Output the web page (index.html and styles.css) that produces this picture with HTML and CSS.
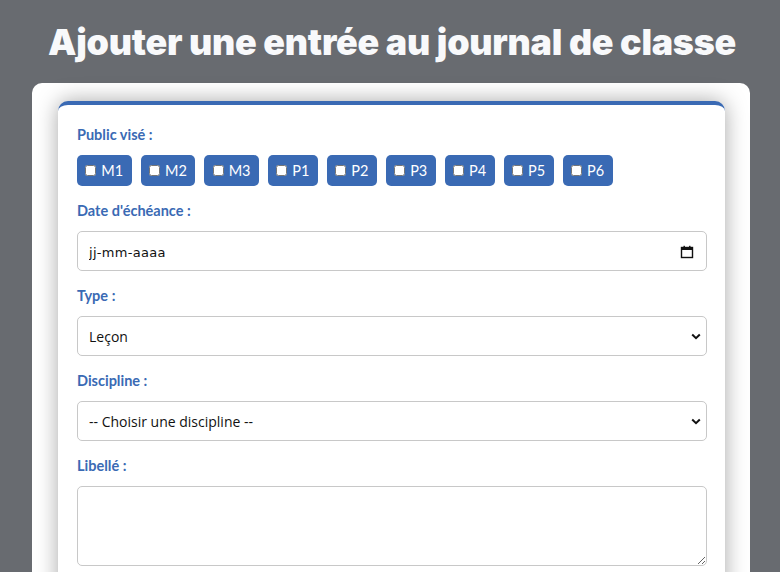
FILE: index.html
```html
<!DOCTYPE html>
<html lang="fr">
<head>
  <meta charset="UTF-8">
  <meta name="viewport" content="width=device-width, initial-scale=1">
  <title>Journal de classe</title>
  <link rel="stylesheet" href="styles.css">
</head>
<body>

  <h1 class="page-title">Ajouter une entrée au journal de classe</h1>

  <div class="outer-card">
    <form class="entry-form">

      <label class="field-label">Public visé :</label>
      <div class="chip-row">
        <label class="chip"><input type="checkbox"> M1</label>
        <label class="chip"><input type="checkbox"> M2</label>
        <label class="chip"><input type="checkbox"> M3</label>
        <label class="chip"><input type="checkbox"> P1</label>
        <label class="chip"><input type="checkbox"> P2</label>
        <label class="chip"><input type="checkbox"> P3</label>
        <label class="chip"><input type="checkbox"> P4</label>
        <label class="chip"><input type="checkbox"> P5</label>
        <label class="chip"><input type="checkbox"> P6</label>
      </div>

      <label class="field-label">Date d'échéance :</label>
      <div class="field-box date-box">
        <input class="date-text" type="text" placeholder="jj-mm-aaaa">
        <svg class="cal-icon" width="14" height="14" viewBox="0 0 14 14">
          <rect x="1.5" y="2.5" width="11" height="10" fill="none" stroke="#111" stroke-width="1.4"/>
          <rect x="1.5" y="2.5" width="11" height="2.5" fill="#111"/>
          <rect x="3.5" y="0.8" width="1.4" height="2.5" fill="#111"/>
          <rect x="9.1" y="0.8" width="1.4" height="2.5" fill="#111"/>
        </svg>
      </div>

      <label class="field-label">Type :</label>
      <div class="field-box select-box">
        <select class="plain-select">
          <option>Leçon</option>
          <option>Devoir</option>
          <option>Évaluation</option>
        </select>
        <svg class="chevron" width="10" height="7" viewBox="0 0 10 7">
          <path d="M1.2 1.5 L5 5.2 L8.8 1.5" fill="none" stroke="#111" stroke-width="2"/>
        </svg>
      </div>

      <label class="field-label">Discipline :</label>
      <div class="field-box select-box">
        <select class="plain-select">
          <option>-- Choisir une discipline --</option>
          <option>Français</option>
          <option>Mathématiques</option>
        </select>
        <svg class="chevron" width="10" height="7" viewBox="0 0 10 7">
          <path d="M1.2 1.5 L5 5.2 L8.8 1.5" fill="none" stroke="#111" stroke-width="2"/>
        </svg>
      </div>

      <label class="field-label">Libellé :</label>
      <textarea class="note-area"></textarea>

    </form>
  </div>

</body>
</html>
```

FILE: styles.css
```css
body {
  margin: 0;
  background: #686b70;
  font-family: Lato, "Open Sans", sans-serif;
}

.page-title {
  margin: 0;
  padding: 20px 0 19px 4px;
  font-family: Inter, Roboto, sans-serif;
  font-weight: 900;
  font-size: 35.8px;
  line-height: 44px;
  letter-spacing: -0.25px;
  color: #f8f9fb;
  text-align: center;
}

.outer-card {
  margin-left: 32px;
  width: 718px;
  background: #fff;
  border-radius: 10px;
  padding: 18px 25px 0 26px;
  box-sizing: border-box;
  height: 520px;
}

.entry-form {
  display: flex;
  flex-direction: column;
  background: #fff;
  border-top: 4px solid #3a6ab4;
  border-radius: 10px 10px 0 0;
  box-shadow: 0 0 22px rgba(0, 0, 0, 0.35);
  padding: 20px 18px 30px 19px;
}

.field-label {
  font-size: 14.5px;
  font-weight: 700;
  color: #3a6ab4;
  line-height: 20px;
  margin-bottom: 10px;
}

.chip-row {
  display: flex;
  gap: 9px;
  margin-bottom: 15px;
}

.chip {
  display: flex;
  align-items: center;
  gap: 2px;
  height: 31px;
  padding: 0 8.5px 0 8.3px;
  background: #3a6ab4;
  color: #fff;
  border-radius: 5px;
  font-size: 14.5px;
  box-sizing: border-box;
}

.chip input {
  width: 11px;
  height: 11px;
  margin: 0 3px 0 0;
}

.field-box {
  display: flex;
  align-items: center;
  height: 40px;
  border: 1px solid #c8c8c8;
  border-radius: 5px;
  box-sizing: border-box;
  padding: 2px 12px 0 11px;
  margin-bottom: 15px;
}

.select-box {
  padding: 0 5px 0 11px;
}

.date-text {
  flex: 1;
  border: none;
  outline: none;
  padding: 0;
  font-family: "DejaVu Sans", sans-serif;
  font-size: 13px;
  letter-spacing: 0.3px;
  background: transparent;
}

.date-text::placeholder {
  color: #111;
}

.plain-select {
  flex: 1;
  appearance: none;
  border: none;
  outline: none;
  background: transparent;
  font-family: "Open Sans", sans-serif;
  font-size: 14px;
  color: #111;
  padding: 0;
}

.note-area {
  height: 80px;
  border: 1px solid #c8c8c8;
  border-radius: 5px;
  box-sizing: border-box;
  resize: vertical;
}
```
